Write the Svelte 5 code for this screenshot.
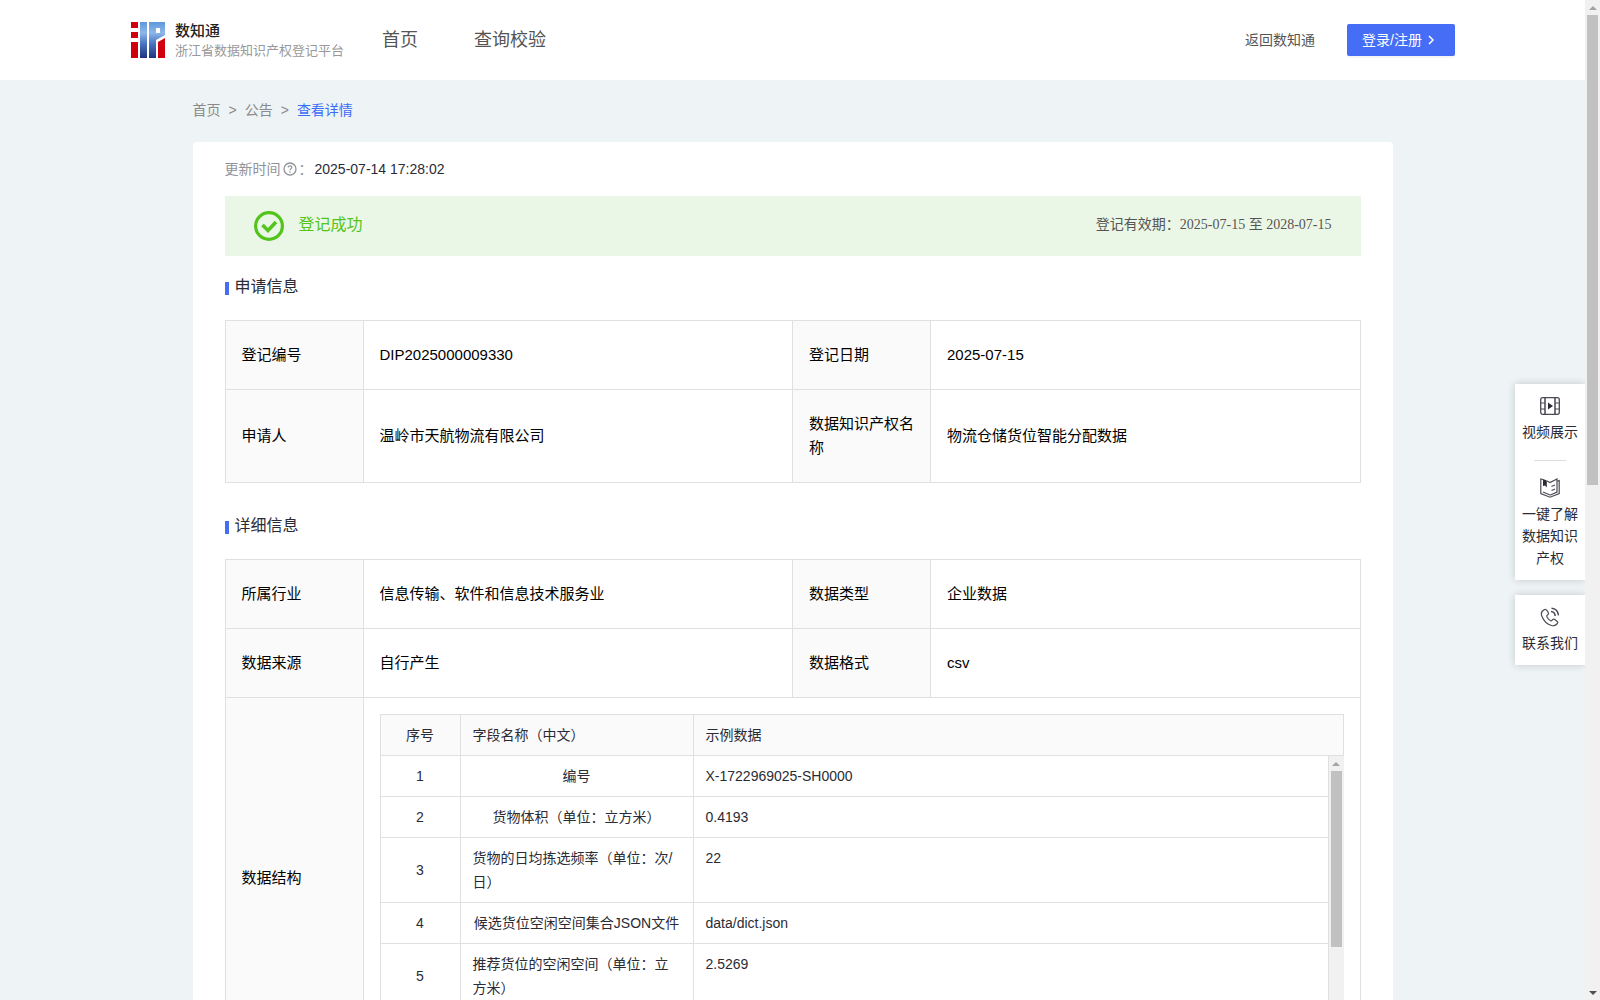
<script>
    const menus = ['首页', '查询校验']

    const baseInfo = [
        ['登记编号', 'DIP2025000009330', '登记日期', '2025-07-15'],
        ['申请人', '温岭市天航物流有限公司', '数据知识产权名称', '物流仓储货位智能分配数据'],
    ]

    const detailInfo = [
        ['所属行业', '信息传输、软件和信息技术服务业', '数据类型', '企业数据'],
        ['数据来源', '自行产生', '数据格式', 'csv'],
    ]

    const fields = [
        { name: '编号', sample: 'X-1722969025-SH0000' },
        { name: '货物体积（单位：立方米）', sample: '0.4193' },
        { name: '货物的日均拣选频率（单位：次/日）', sample: '22' },
        { name: '候选货位空闲空间集合JSON文件', sample: 'data/dict.json' },
        { name: '推荐货位的空闲空间（单位：立方米）', sample: '2.5269' },
    ]
</script>

{#snippet infoRows(rows)}
    {#each rows as row}
        <tr>
            <th scope="row">{row[0]}</th>
            <td>{row[1]}</td>
            <th scope="row">{row[2]}</th>
            <td>{row[3]}</td>
        </tr>
    {/each}
{/snippet}

{#snippet infoCols()}
    <colgroup>
        <col class="col-label">
        <col>
        <col class="col-label">
        <col>
    </colgroup>
{/snippet}

<div class="window">
    <div class="page">
        <header>
            <a class="brand" href="#home">
                <svg class="logo" viewBox="0 0 34 36" width="34" height="36" aria-hidden="true">
                    <defs>
                        <linearGradient id="blue" x1="0" y1="0" x2="0" y2="36" gradientUnits="userSpaceOnUse">
                            <stop offset="0" stop-color="#5f97da" />
                            <stop offset="0.3" stop-color="#8db8ea" />
                            <stop offset="0.6" stop-color="#4a74bf" />
                            <stop offset="1" stop-color="#20347f" />
                        </linearGradient>
                    </defs>
                    <path fill="#d0000f" d="M0 0h7v6H0zM0 10h7v6H0zM0 20h7v16H0zM27 20l7-4v20h-7z" />
                    <path fill="url(#blue)" d="M9 0h7v36H9zM18 0h16v13l-9 5v18h-7zM25 6v5h4V6z" fill-rule="evenodd" />
                </svg>
                <span class="brand-text">
                    <strong>数知通</strong>
                    <small>浙江省数据知识产权登记平台</small>
                </span>
            </a>
            <nav>
                {#each menus as menu}
                    <a href="#{menu}">{menu}</a>
                {/each}
            </nav>
            <a class="back" href="#back">返回数知通</a>
            <button class="login">
                登录/注册
                <svg viewBox="0 0 8 10" width="8" height="10" aria-hidden="true">
                    <path d="M2 1l4 4-4 4" fill="none" stroke="#fff" stroke-width="1.5" />
                </svg>
            </button>
        </header>

        <main>
            <nav class="crumbs" aria-label="breadcrumb">
                <a href="#home">首页</a>
                <span>&gt;</span>
                <a href="#notice">公告</a>
                <span>&gt;</span>
                <a class="current" href="#detail">查看详情</a>
            </nav>

            <section class="card">
                <div class="updated">
                    <span class="muted">更新时间</span>
                    <svg viewBox="0 0 14 14" width="14" height="14" aria-hidden="true">
                        <circle cx="7" cy="7" r="6" fill="none" stroke="#909399" stroke-width="1.3" />
                        <path d="M5.2 5.6c0-2.4 3.6-2.3 3.6-.1 0 1.2-1.8 1.3-1.8 2.7" fill="none" stroke="#909399" stroke-width="1.2" />
                        <circle cx="7" cy="10" r="0.8" fill="#909399" />
                    </svg>
                    <span class="muted">：</span>
                    <time>2025-07-14 17:28:02</time>
                </div>

                <div class="banner">
                    <svg viewBox="0 0 30 30" width="30" height="30" aria-hidden="true">
                        <circle cx="15" cy="15" r="13.4" fill="none" stroke="#52c41a" stroke-width="3.2" />
                        <path d="M8.500 14l5.500 5.500 8-8.500" fill="none" stroke="#52c41a" stroke-width="3.600" />
                    </svg>
                    <span class="status">登记成功</span>
                    <span class="valid">登记有效期：2025-07-15 至 2028-07-15</span>
                </div>

                <h2>申请信息</h2>
                <table class="info">
                    {@render infoCols()}
                    <tbody>
                        {@render infoRows(baseInfo)}
                    </tbody>
                </table>

                <h2 class="next">详细信息</h2>
                <table class="info">
                    {@render infoCols()}
                    <tbody>
                        {@render infoRows(detailInfo)}
                        <tr>
                            <th scope="row">数据结构</th>
                            <td class="nest" colspan="3">
                                <table class="fields">
                                    <colgroup>
                                        <col class="col-no">
                                        <col class="col-name">
                                        <col>
                                    </colgroup>
                                    <thead>
                                        <tr>
                                            <th class="no">序号</th>
                                            <th>字段名称（中文）</th>
                                            <th>示例数据</th>
                                        </tr>
                                    </thead>
                                </table>
                                <div class="fields-body">
                                    <table class="fields">
                                        <colgroup>
                                            <col class="col-no">
                                            <col class="col-name">
                                            <col>
                                        </colgroup>
                                        <tbody>
                                            {#each fields as field, i}
                                                <tr>
                                                    <td class="no">{i + 1}</td>
                                                    <td><div class="name">{field.name}</div></td>
                                                    <td class="sample">{field.sample}</td>
                                                </tr>
                                            {/each}
                                        </tbody>
                                    </table>
                                    <div class="scrollbar">
                                        <i class="arrow up"></i>
                                        <i class="thumb short"></i>
                                    </div>
                                </div>
                            </td>
                        </tr>
                    </tbody>
                </table>
            </section>
        </main>
    </div>

    <aside>
        <div class="panel">
            <a href="#video">
                <svg viewBox="0 0 20 20" width="20" height="20" fill="none" stroke="#4a4a55" aria-hidden="true">
                    <rect x="0.7" y="1.7" width="18.6" height="16.6" rx="2" stroke-width="1.3" />
                    <path d="M5 2v16M15 2v16" stroke="#2b2b36" stroke-width="1.3" />
                    <path d="M1 7h4M1 13h4M15 7h4M15 13h4" stroke-width="1.1" />
                    <path d="M8 6.500l5 3.500-5 3.500z" fill="#2b2b36" stroke="none" />
                </svg>
                视频展示
            </a>
            <hr>
            <a href="#about">
                <svg viewBox="0 0 20 20" width="20" height="20" fill="none" stroke="#4a4a55" stroke-width="1.2" aria-hidden="true">
                    <path d="M3 1.500L.8 1v14.500l9.200 3.700 9.200-3.700V2.500L17 3.300" />
                    <path d="M7 3l3 1.500 7-3.500v13l-6.500 3L10 17l-7-3" />
                    <path d="M11.500 8.500L15 7M11.500 12.500L15 11" />
                    <path d="M3 1l3.800 1.500V9.500L5 7.500l-2 .5z" fill="#2b2b36" stroke="none" />
                </svg>
                一键了解数据知识产权
            </a>
        </div>
        <div class="panel">
            <a href="#contact">
                <svg viewBox="0 0 20 20" width="20" height="20" fill="none" stroke="#4a4a55" stroke-width="1.2" aria-hidden="true">
                    <path d="M4.500 2.500c-3 1.500-3.800 4-2.500 7 1.800 4.500 5 7.800 9.500 9 3 .8 5.500-.8 6.300-3 .3-.9-3.500-3.600-4.500-3.300-1 .3-1.500 1.800-2.300 1.600-1.800-.5-4-3-4.300-4.800-.1-.8 1.700-1.300 1.800-2.200.1-1.500-2-5-4-4.300z" />
                    <path d="M11 4.500c2.500.2 4 2 4.200 4.500M11.500 1.300c4 .4 6.500 3 7 7" stroke-width="1.500" />
                </svg>
                联系我们
            </a>
        </div>
    </aside>

    <div class="scrollbar">
        <i class="arrow up"></i>
        <i class="thumb"></i>
        <i class="arrow down"></i>
    </div>
</div>

<style>
    :global(body) {
        background: #eef3f6;
        font-family: 'Liberation Sans', 'Noto Sans CJK SC', sans-serif;
        font-size: 14px;
    }

    a {
        color: inherit;
        text-decoration: none;
    }

    svg {
        flex: none;
    }

    .window {
        display: grid;
        grid-template-columns: minmax(0, 1fr) 15px;
        height: 100vh;
        position: relative;
        overflow: hidden;
    }

    .page {
        overflow: hidden;
    }

    header {
        display: flex;
        align-items: center;
        height: 80px;
        padding: 0 130px 0 131px;
        background: #fff;
        color: #555;
        line-height: 20px;
    }

    .brand {
        display: flex;
        align-items: center;
        gap: 10px;
        margin-right: 38px;
    }

    .brand-text {
        display: flex;
        flex-direction: column;
        padding-top: 1px;
    }

    .brand strong {
        color: #222;
        font-size: 15px;
        font-weight: 500;
    }

    .brand small {
        color: #999;
        font-size: 13px;
    }

    header nav {
        display: flex;
        gap: 56px;
        font-size: 18px;
    }

    .back {
        margin-left: auto;
        margin-right: 32px;
    }

    .login {
        display: flex;
        align-items: center;
        gap: 5px;
        width: 108px;
        height: 32px;
        padding: 0 15px;
        border: none;
        border-radius: 2px;
        background: #456df5;
        box-shadow: 0 2px 0 rgba(0, 0, 0, 0.04);
        color: #fff;
        font: inherit;
    }

    main {
        max-width: 1200px;
        margin: 0 auto;
    }

    .crumbs {
        display: flex;
        gap: 8px;
        padding: 19px 0 21px;
        color: #8a8a8a;
        line-height: 22px;
    }

    .crumbs .current {
        color: #3a6cf6;
    }

    .card {
        padding: 16px 32px;
        border-radius: 4px;
        background: #fff;
    }

    .updated {
        display: flex;
        align-items: center;
        gap: 2px;
        height: 22px;
        margin-bottom: 16px;
        color: #2b2b36;
        line-height: 22px;
    }

    .muted {
        color: #909399;
    }

    .banner {
        display: flex;
        align-items: center;
        height: 60px;
        padding: 0 29px;
        background: #ebf7e6;
        line-height: 24px;
    }

    .banner span {
        padding-bottom: 2px;
    }

    .status {
        margin-left: 15px;
        color: #52c41a;
        font-size: 16px;
    }

    .valid {
        margin-left: auto;
        color: #555;
        font-family: 'Liberation Serif', 'Noto Sans CJK SC', serif;
    }

    h2 {
        display: flex;
        gap: 6px;
        height: 25px;
        margin: 20px 0 19px;
        color: #2b2b36;
        font-size: 16px;
        font-weight: 400;
        line-height: 22px;
    }

    h2.next {
        margin-top: 32px;
    }

    h2::before {
        content: '';
        width: 4px;
        height: 13px;
        margin-top: 6px;
        background: #456df5;
    }

    table {
        width: 100%;
        border-collapse: collapse;
        table-layout: fixed;
    }

    th,
    td {
        border: 1px solid #e0e0e0;
        font-weight: 400;
        text-align: left;
        line-height: 24px;
    }

    th {
        background: #fafafa;
    }

    .info > tbody > tr > * {
        padding: 22px 12px 22px 16px;
        color: #000;
        font-size: 15px;
    }

    .col-label {
        width: 138px;
    }

    .info > tbody > tr > .nest {
        padding: 16px;
    }

    .fields th,
    .fields td {
        padding: 8px 12px;
        color: #2b2b36;
        font-size: 14px;
    }

    .col-no {
        width: 80px;
    }

    .col-name {
        width: 233px;
    }

    .fields .no {
        text-align: center;
    }

    .name {
        width: fit-content;
        margin: 0 auto;
    }

    .fields .sample {
        vertical-align: top;
    }

    .fields-body {
        display: grid;
        grid-template-columns: minmax(0, 1fr) 15px;
        align-items: start;
        height: 285px;
        overflow: hidden;
    }

    .fields-body .fields tr:first-child td {
        border-top: none;
    }

    .scrollbar {
        display: flex;
        flex-direction: column;
        align-items: center;
        height: 100%;
        background: #f1f1f1;
    }

    .thumb {
        width: 11px;
        height: 47%;
        background: #c1c1c1;
    }

    .thumb.short {
        height: 176px;
    }

    .arrow {
        display: grid;
        place-items: center;
        flex: none;
        width: 15px;
        height: 15px;
    }

    .arrow::before {
        content: '';
        border: 4px solid transparent;
    }

    .up::before {
        border-top: none;
        border-bottom-color: #a3a3a3;
    }

    .down {
        margin-top: auto;
    }

    .down::before {
        border-bottom: none;
        border-top-color: #505050;
    }

    aside {
        position: absolute;
        top: 372px;
        right: 15px;
        width: 70px;
        overflow: hidden;
        padding: 12px 0 12px 12px;
    }

    .panel {
        margin-bottom: 15px;
        padding: 12px 6px 11px;
        background: #fff;
        box-shadow: 0 0 8px rgba(0, 0, 0, 0.18);
        color: #2b2b36;
        line-height: 22px;
        text-align: center;
    }

    .panel a {
        display: flex;
        flex-direction: column;
        align-items: center;
        gap: 5px;
    }

    hr {
        width: 32px;
        margin: 17px auto;
        border: none;
        border-top: 1px solid #ddd;
    }
</style>
